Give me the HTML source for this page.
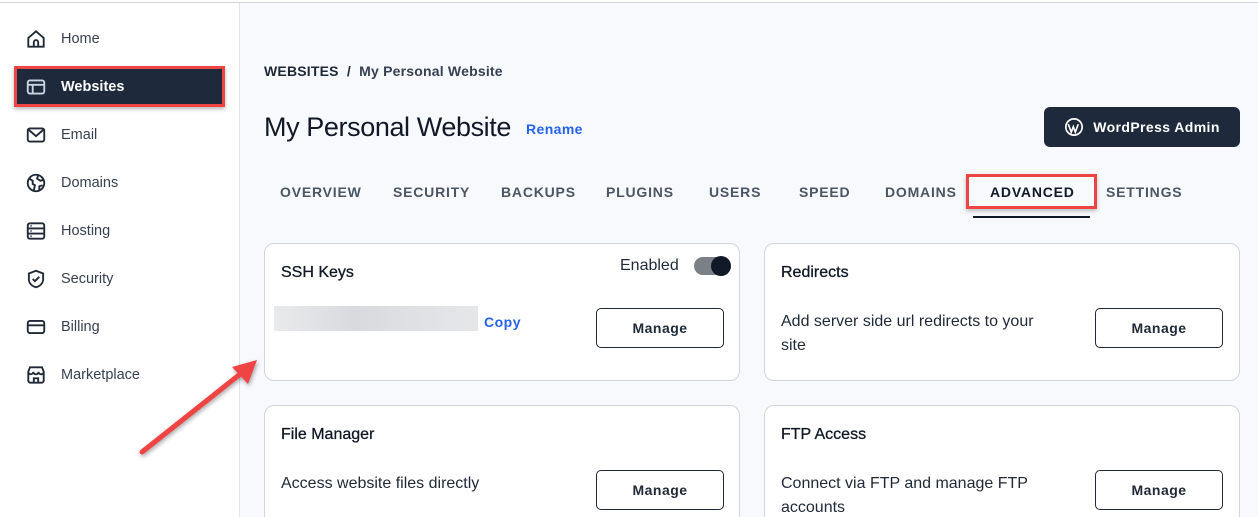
<!DOCTYPE html>
<html style="width:1258px;height:517px;overflow:hidden"><head><style>
*{box-sizing:border-box;margin:0;padding:0}
body{width:1258px;height:517px;overflow:hidden;background:#f7f9fc;font-family:"Liberation Sans",sans-serif;color:#1f2937;position:relative}
.top{position:absolute;left:0;top:0;width:1258px;height:3px;border-bottom:1px solid #d4d8de;background:#fff}
.side{position:absolute;left:0;top:3px;width:240px;height:514px;background:#fff;border-right:1px solid #e1e4e8}
.nav{position:absolute;left:25px;display:flex;align-items:center;font-size:14.5px;color:#374151}
.nav svg{width:22px;height:22px;margin-right:14px;fill:none;stroke:#1f2937;stroke-width:1.7}
.act{position:absolute;left:14px;top:66px;width:211px;height:41px;background:#1e293b;border:3px solid #ef4444;box-shadow:0 2px 4px rgba(0,0,0,.3)}
.abs{position:absolute}
.tab{position:absolute;top:184px;font-size:14px;font-weight:bold;letter-spacing:.8px;color:#4b5563}
.card{position:absolute;background:#fff;border:1px solid #d1d5db;border-radius:10px;overflow:hidden}
.ct{position:absolute;left:16px;top:20px;font-size:16px;color:#111827;-webkit-text-stroke:.3px #111827}
.btn{position:absolute;width:128px;height:40px;border:1px solid #1f2937;border-radius:5px;font-size:14px;font-weight:bold;letter-spacing:.5px;display:flex;align-items:center;justify-content:center;background:#fff}
.desc{position:absolute;left:16px;font-size:16px;line-height:24px;color:#1f2937}
</style></head><body>
<div class="top"></div>
<div class="side"></div>
<div class="act"></div>
<div class="nav" style="top:28px"><svg viewBox="0 0 20 20"><path d="M3 9L10 3l7 6v8H3z M8 17v-4a2 2 0 014 0v4"/></svg>Home</div>
<div class="nav" style="top:76px;color:#fff;font-weight:bold"><svg viewBox="0 0 20 20" style="stroke:#cbd5e1"><rect x="2.5" y="4" width="15" height="12" rx="2"/><path d="M2.5 8h15M7 8v8"/></svg>Websites</div>
<div class="nav" style="top:124px"><svg viewBox="0 0 20 20"><rect x="2.5" y="4" width="15" height="12" rx="2"/><path d="M3 5l7 6 7-6"/></svg>Email</div>
<div class="nav" style="top:172px"><svg viewBox="0 0 20 20"><circle cx="10" cy="10" r="7.5"/><path d="M4 6l3 2 0 3 2 1-1 5M12 3l-1 3 3 2 3-1M13 17l0-4 3-1"/></svg>Domains</div>
<div class="nav" style="top:220px"><svg viewBox="0 0 20 20"><rect x="2.5" y="3" width="15" height="14" rx="2"/><path d="M2.5 7.7h15M2.5 12.3h15M5 5.3h1M5 10h1M5 14.7h1"/></svg>Hosting</div>
<div class="nav" style="top:268px"><svg viewBox="0 0 20 20"><path d="M10 2.5l6.5 2.5v5c0 4-3 6.5-6.5 7.5C6.5 16.5 3.5 14 3.5 10V5z M7 10l2 2 4-4"/></svg>Security</div>
<div class="nav" style="top:316px"><svg viewBox="0 0 20 20"><rect x="2.5" y="4.5" width="15" height="11" rx="2"/><path d="M2.5 8.5h15"/></svg>Billing</div>
<div class="nav" style="top:364px"><svg viewBox="0 0 20 20"><path d="M3 7l1.5-4h11L17 7v8a2 2 0 01-2 2H5a2 2 0 01-2-2z M3 7a2.3 2.3 0 004.6 0 2.3 2.3 0 004.7 0 2.3 2.3 0 004.7 0M8 17v-4h4v4"/></svg>Marketplace</div>

<div class="abs" style="left:264px;top:63px;font-size:14px;font-weight:bold;color:#1f2937;letter-spacing:.2px">WEBSITES &nbsp;/&nbsp; <span style="color:#374151">My Personal Website</span></div>
<div class="abs" style="left:264px;top:112px;font-size:27px;color:#111827;letter-spacing:-.4px">My Personal Website</div>
<div class="abs" style="left:526px;top:121px;font-size:14px;font-weight:bold;color:#2563eb;letter-spacing:.4px">Rename</div>
<div class="abs" style="left:1044px;top:107px;width:196px;height:40px;background:#1e293b;border-radius:6px;color:#fff;font-size:14px;font-weight:bold;display:flex;align-items:center;justify-content:center;letter-spacing:.4px"><svg width="20" height="20" viewBox="0 0 20 20" style="margin-right:9px"><circle cx="10" cy="10" r="9" fill="#fff"/><circle cx="10" cy="10" r="7.3" fill="#1e293b"/><path d="M4.3 7.2l3 8 2-5.5 2 5.5 3-8" stroke="#fff" stroke-width="1.6" fill="none"/></svg>WordPress Admin</div>

<div class="tab" style="left:280px">OVERVIEW</div>
<div class="tab" style="left:393px">SECURITY</div>
<div class="tab" style="left:501px">BACKUPS</div>
<div class="tab" style="left:606px">PLUGINS</div>
<div class="tab" style="left:709px">USERS</div>
<div class="tab" style="left:799px">SPEED</div>
<div class="tab" style="left:885px">DOMAINS</div>
<div class="abs" style="left:966px;top:174px;width:131px;height:35px;border:3px solid #ef4444;box-shadow:0 2px 4px rgba(0,0,0,.25)"></div>
<div class="tab" style="left:990px;color:#111827">ADVANCED</div>
<div class="abs" style="left:973px;top:216px;width:117px;height:2px;background:#111827"></div>
<div class="tab" style="left:1106px">SETTINGS</div>

<div class="card" style="left:264px;top:243px;width:476px;height:138px">
<div class="ct">SSH Keys</div>
<div class="abs" style="left:355px;top:13px;font-size:16px">Enabled</div>
<div class="abs" style="left:429px;top:13px;width:36px;height:18px;border-radius:9px;background:#7b7f86"></div>
<div class="abs" style="left:446px;top:12px;width:20px;height:20px;border-radius:50%;background:#111827"></div>
<div class="abs" style="left:9px;top:62px;width:204px;height:25px;background:linear-gradient(90deg,#e9eaec,#d8dadd 40%,#e6e7e9)"></div>
<div class="abs" style="left:219px;top:70px;font-size:14px;font-weight:bold;color:#2563eb;letter-spacing:.5px">Copy</div>
<div class="btn" style="left:331px;top:64px">Manage</div>
</div>
<div class="card" style="left:764px;top:243px;width:476px;height:138px">
<div class="ct">Redirects</div>
<div class="desc" style="top:66px">Add server side url redirects to your<br>site</div>
<div class="btn" style="left:330px;top:64px">Manage</div>
</div>
<div class="card" style="left:264px;top:405px;width:476px;height:130px">
<div class="ct">File Manager</div>
<div class="desc" style="top:66px">Access website files directly</div>
<div class="btn" style="left:331px;top:64px">Manage</div>
</div>
<div class="card" style="left:764px;top:405px;width:476px;height:130px">
<div class="ct">FTP Access</div>
<div class="desc" style="top:66px">Connect via FTP and manage FTP<br>accounts</div>
<div class="btn" style="left:330px;top:64px">Manage</div>
</div>

<svg class="abs" style="left:0;top:0" width="1258" height="517"><g style="filter:drop-shadow(1px 2px 2px rgba(0,0,0,.35))"><line x1="142" y1="452" x2="244" y2="371" stroke="#ef4444" stroke-width="5" stroke-linecap="round"/><path d="M257 360L232 367L248 384Z" fill="#ef4444"/></g></svg>
</body></html>
